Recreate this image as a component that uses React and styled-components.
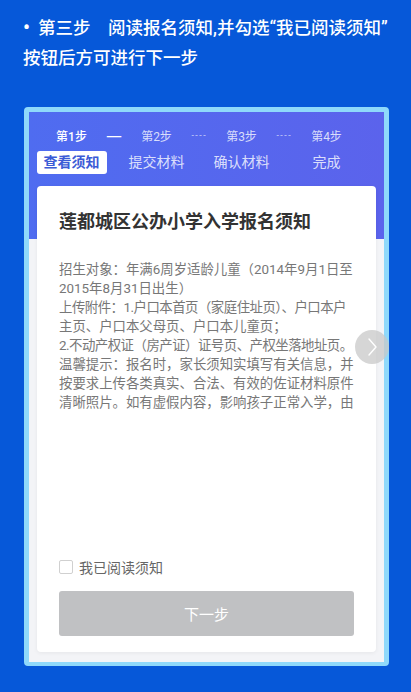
import styled, { createGlobalStyle } from "styled-components";

const GlobalStyle = createGlobalStyle`
  html, body {
    margin: 0;
    padding: 0;
    background: #0658d9;
  }
  body {
    font-family: Roboto, "Noto Sans CJK SC", sans-serif;
  }
`;

const steps = [
  { no: "第1步", label: "查看须知" },
  { no: "第2步", label: "提交材料" },
  { no: "第3步", label: "确认材料" },
  { no: "第4步", label: "完成" },
];

const noticeLines = [
  { text: "招生对象：年满6周岁适龄儿童（2014年9月1日至" },
  { text: "2015年8月31日出生）" },
  { text: "上传附件：1.户口本首页（家庭住址页）、户口本户", tight: true },
  { text: "主页、户口本父母页、户口本儿童页；" },
  { text: "2.不动产权证（房产证）证号页、产权坐落地址页。", tight: true },
  { text: "温馨提示：报名时，家长须知实填写有关信息，并" },
  { text: "按要求上传各类真实、合法、有效的佐证材料原件" },
  { text: "清晰照片。如有虚假内容，影响孩子正常入学，由" },
];

function App() {
  return (
    <>
      <GlobalStyle />
      <Page>
        <Intro>
          <IntroLine>
            <Bullet>•</Bullet>第三步　阅读报名须知,并勾选“我已阅读须知”
          </IntroLine>
          <IntroLine>按钮后方可进行下一步</IntroLine>
        </Intro>
        <Frame>
          <Screen>
            <Header>
              <StepRow>
                {steps.map((s, i) => [
                  <StepNo key={s.no} $active={i === 0}>{s.no}</StepNo>,
                  i < steps.length - 1 && (
                    <Sep key={"sep" + i} $done={i === 0}>{i === 0 ? "—" : "----"}</Sep>
                  ),
                ])}
              </StepRow>
              <LabelRow>
                {steps.map((s, i) => (
                  <LabelCell key={s.label}>
                    <StepLabel $active={i === 0}>{s.label}</StepLabel>
                  </LabelCell>
                ))}
              </LabelRow>
            </Header>
            <Card>
              <Title>莲都城区公办小学入学报名须知</Title>
              <Notice>
                {noticeLines.map((l) => (
                  <Line key={l.text} $tight={l.tight}>{l.text}</Line>
                ))}
              </Notice>
              <CheckRow>
                <Box />
                <CheckText>我已阅读须知</CheckText>
              </CheckRow>
              <NextButton disabled>下一步</NextButton>
            </Card>
            <NextArrow>
              <svg width="14" height="22" viewBox="0 0 14 22" fill="none">
                <path d="M4 3l7 8-7 8" stroke="#fff" strokeWidth="1.4" strokeLinecap="round" strokeLinejoin="round" />
              </svg>
            </NextArrow>
          </Screen>
        </Frame>
      </Page>
    </>
  );
}

export default App;

const Page = styled.div`
  width: 411px;
  height: 692px;
  overflow: hidden;
  background: #0658d9;
`;

const Intro = styled.div`
  padding: 12px 0 0 23px;
  color: #fff;
  font-size: 17.5px;
  line-height: 30px;
  font-weight: 500;
`;

const IntroLine = styled.div`
  white-space: nowrap;
`;

const Bullet = styled.span`
  display: inline-block;
  width: 15px;
  font-size: 20px;
`;

const Frame = styled.div`
  margin: 34px 0 0 24px;
  width: 355px;
  border: 5px solid #8fd9fb;
  border-bottom-width: 4px;
  border-radius: 4px;
`;

const Screen = styled.div`
  position: relative;
  background: #f3f4f7;
  padding-bottom: 10px;
`;

const Header = styled.div`
  height: 127px;
  background: linear-gradient(90deg, #4f6cf0, #5b63ec);
  padding-top: 14px;
  box-sizing: border-box;
`;

const StepRow = styled.div`
  display: grid;
  grid-template-columns: 57px 28px 57px 28px 57px 28px 57px;
  padding-left: 14px;
  height: 18px;
  align-items: center;
`;

const StepNo = styled.div`
  text-align: center;
  font-size: 12px;
  color: ${(p) => (p.$active ? "#fff" : "rgba(255,255,255,0.78)")};
  font-weight: ${(p) => (p.$active ? 500 : 400)};
`;

const Sep = styled.div`
  text-align: center;
  font-family: "DejaVu Sans", sans-serif;
  font-size: ${(p) => (p.$done ? "16px" : "8px")};
  color: ${(p) => (p.$done ? "#fff" : "rgba(255,255,255,0.7)")};
  letter-spacing: ${(p) => (p.$done ? "0" : "1px")};
`;

const LabelRow = styled.div`
  display: grid;
  grid-template-columns: repeat(4, 85px);
  margin-top: 7px;
`;

const LabelCell = styled.div`
  display: flex;
  justify-content: center;
`;

const StepLabel = styled.div`
  height: 23px;
  line-height: 23px;
  padding: 0 7px;
  border-radius: 3px;
  font-size: 14px;
  background: ${(p) => (p.$active ? "#fff" : "transparent")};
  color: ${(p) => (p.$active ? "#3b5bd6" : "rgba(255,255,255,0.8)")};
  font-weight: ${(p) => (p.$active ? 700 : 400)};
`;

const Card = styled.div`
  margin: -53px 8px 0;
  background: #fff;
  border-radius: 4px;
  box-shadow: 0 1px 4px rgba(0, 0, 0, 0.06);
  padding: 23px 22px 16px;
  display: flex;
  flex-direction: column;
  position: relative;
`;

const Title = styled.div`
  font-size: 18px;
  line-height: 26px;
  font-weight: 700;
  color: #333;
`;

const Notice = styled.div`
  margin-top: 25px;
  height: 152px;
  overflow: hidden;
  font-size: 13.4px;
  line-height: 19px;
  color: #777;
`;

const Line = styled.div`
  white-space: nowrap;
  letter-spacing: ${(p) => (p.$tight ? "-0.5px" : "0")};
`;

const CheckRow = styled.div`
  margin-top: 145px;
  height: 20px;
  display: flex;
  align-items: center;
  gap: 6px;
`;

const Box = styled.span`
  width: 12px;
  height: 12px;
  border: 1px solid #d0d0d0;
  border-radius: 2px;
  background: #fff;
`;

const CheckText = styled.span`
  font-size: 14px;
  color: #666;
`;

const NextButton = styled.button`
  margin-top: 14px;
  height: 45px;
  border: none;
  border-radius: 3px;
  background: #c0c1c3;
  color: #fff;
  font-family: inherit;
  font-size: 15px;
`;

const NextArrow = styled.div`
  position: absolute;
  left: 326px;
  top: 218px;
  width: 34px;
  height: 34px;
  border-radius: 50%;
  background: rgba(200, 200, 200, 0.75);
  display: flex;
  align-items: center;
  justify-content: center;
`;
